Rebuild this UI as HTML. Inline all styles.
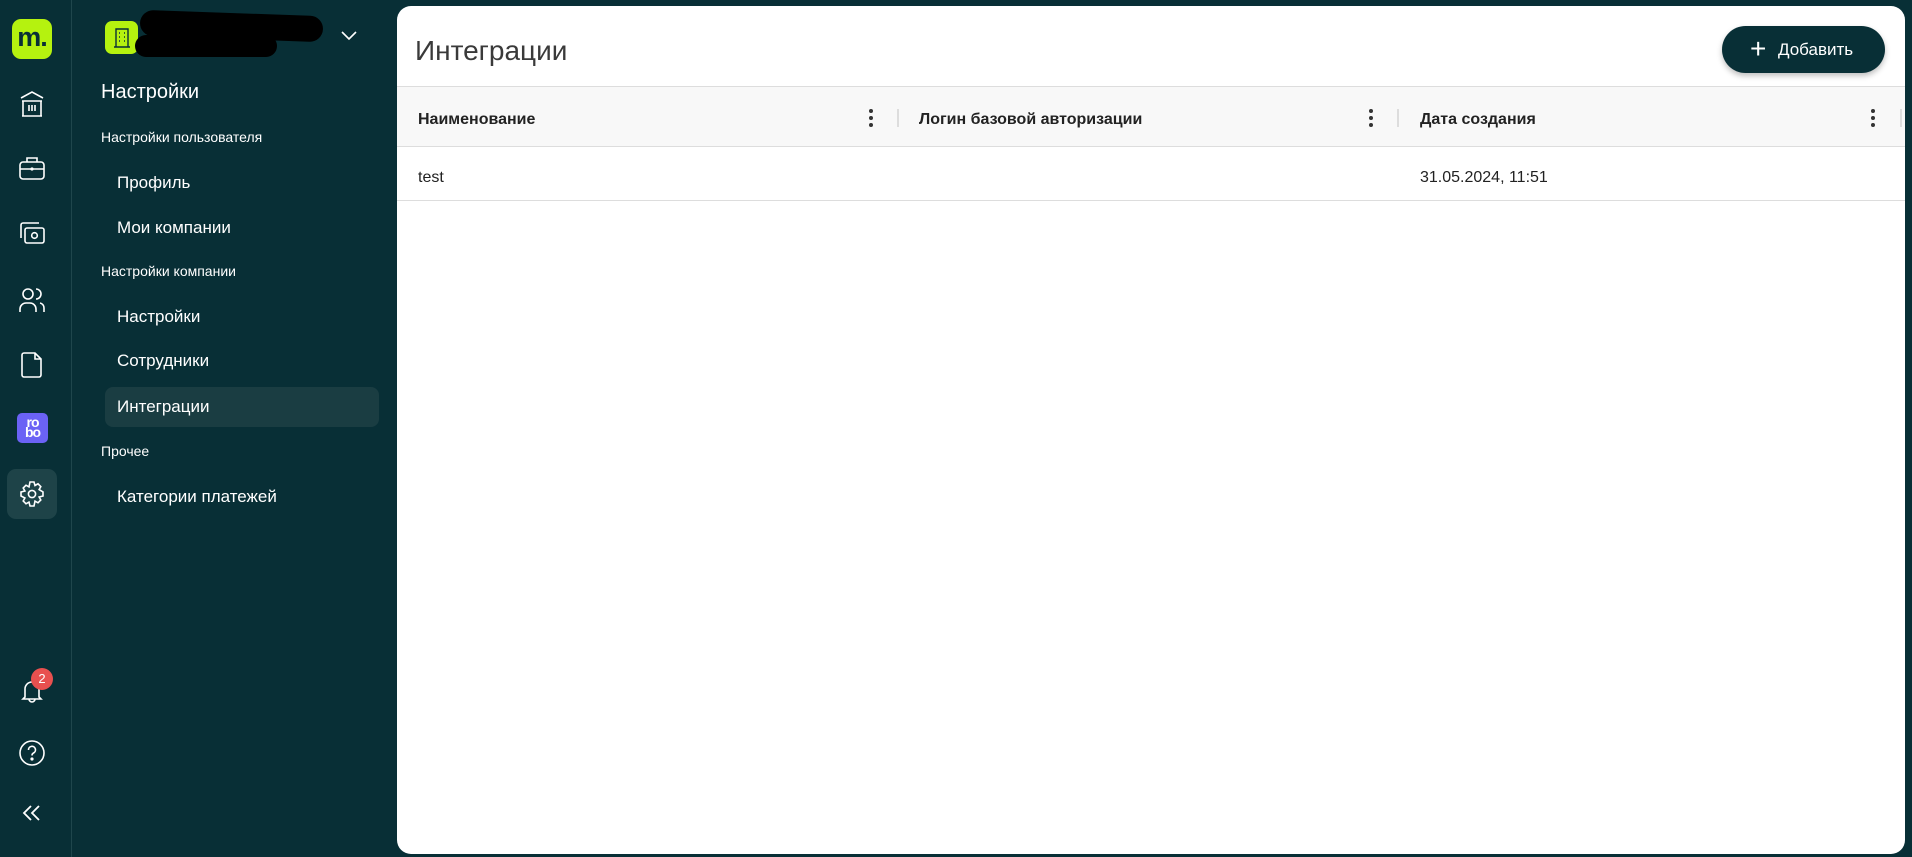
<!DOCTYPE html>
<html><head><meta charset="utf-8"><style>
*{margin:0;padding:0;box-sizing:border-box}
body{width:1912px;height:857px;background:#082f36;font-family:"Liberation Sans","DejaVu Sans",sans-serif;position:relative;overflow:hidden;color:#fff}
.rail{position:absolute;left:0;top:0;width:72px;height:857px;border-right:1px solid #1f464c}
.ic{position:absolute;left:19px;width:26px;height:26px}
.t{position:absolute;white-space:nowrap}
.card{position:absolute;left:397px;top:6px;width:1508px;height:848px;background:#fff;border-radius:14px;overflow:hidden;color:#222}
</style></head><body>
<div class="rail">
 <div style="position:absolute;left:12px;top:19px;width:40px;height:40px;background:#b5f20f;border-radius:9px;color:#082f36;font-weight:bold;font-size:27px;text-align:center;line-height:36px;letter-spacing:-1px">m.</div>
 <svg class="ic" style="top:91px" viewBox="0 0 26 26" fill="none" stroke="#fff" stroke-width="1.6"><path d="M2 7L13 1l11 6M3 10h20M3 25h20M4 10v15M22 10v15M10 14v6M13 14v6M16 14v6"/></svg>
 <svg class="ic" style="top:155px" viewBox="0 0 26 26" fill="none" stroke="#fff" stroke-width="1.6"><rect x="1" y="7" width="24" height="17" rx="3"/><path d="M8 7V3h10v4M1 14h24"/><circle cx="13" cy="14" r=".8" fill="#fff"/></svg>
 <svg class="ic" style="top:220px" viewBox="0 0 26 26" fill="none" stroke="#fff" stroke-width="1.6"><path d="M2 18V5a2 2 0 0 1 2-2h16"/><rect x="6" y="8" width="19" height="15" rx="2"/><circle cx="15.5" cy="15.5" r="2.8"/></svg>
 <svg class="ic" style="top:287px" viewBox="0 0 26 26" fill="none" stroke="#fff" stroke-width="1.6"><circle cx="9" cy="7" r="5"/><path d="M1 25v-3a6 6 0 0 1 6-6h4a6 6 0 0 1 6 6v3M17 2a5 5 0 0 1 0 10M21 16a5 5 0 0 1 4 5v4"/></svg>
 <svg class="ic" style="top:352px" viewBox="0 0 26 26" fill="none" stroke="#fff" stroke-width="1.6"><path d="M5 1h11l6 6v16a2 2 0 0 1-2 2H5a2 2 0 0 1-2-2V3a2 2 0 0 1 2-2zM16 1v6h6"/></svg>
 <div style="position:absolute;left:17px;top:413px;width:31px;height:30px;background:#6b62f5;border-radius:5px;color:#fff;font-weight:bold;font-size:14px;line-height:10px;text-align:center;padding-top:4px;letter-spacing:-1px">ro<br>bo</div>
 <div style="position:absolute;left:7px;top:469px;width:50px;height:50px;background:#1e4348;border-radius:9px"></div>
 <svg class="ic" style="top:481px" viewBox="0 0 26 26" fill="none" stroke="#fff" stroke-width="1.6"><path d="M11 1h4l1 3.5 3-1.7 2.8 2.8-1.7 3L24 11v4l-3.9 1 1.7 3-2.8 2.8-3-1.7L15 25h-4l-1-3.9-3 1.7-2.8-2.8 1.7-3L2 15v-4l3.9-1-1.7-3L7 4.2l3 1.7z"/><circle cx="13" cy="13" r="3.6"/></svg>
 <svg class="ic" style="top:678px" viewBox="0 0 26 26" fill="none" stroke="#fff" stroke-width="1.6"><path d="M6 19v-8a7 7 0 0 1 14 0v8l2 2H4zM10 21a3 3 0 0 0 6 0"/></svg>
 <div style="position:absolute;left:31px;top:668px;width:22px;height:22px;border-radius:50%;background:#e8504f;font-size:13px;text-align:center;line-height:22px">2</div>
 <svg class="ic" style="top:740px" viewBox="0 0 26 26" fill="none" stroke="#fff" stroke-width="1.6"><circle cx="13" cy="13" r="12"/><path d="M9.5 10a3.5 3.5 0 1 1 5 3c-1.2.6-1.5 1.3-1.5 2.5"/><circle cx="13" cy="19" r=".8" fill="#fff"/></svg>
 <svg class="ic" style="top:800px" viewBox="0 0 26 26" fill="none" stroke="#fff" stroke-width="1.8"><path d="M12 6l-7 7 7 7M20 6l-7 7 7 7"/></svg>
</div>
<div style="position:absolute;left:105px;top:21px;width:33px;height:33px;background:#b5f20f;border-radius:7px"></div>
<svg style="position:absolute;left:113px;top:28px" width="18" height="20" viewBox="0 0 18 20" fill="none" stroke="#082f36" stroke-width="1.4"><path d="M3 19V1h12v18M1 19h16M6 5h1M11 5h1M6 9h1M11 9h1M6 13h1M11 13h1"/></svg>
<div style="position:absolute;left:140px;top:13px;width:183px;height:26px;background:#000;border-radius:14px;transform:rotate(2deg)"></div>
<div style="position:absolute;left:135px;top:35px;width:142px;height:22px;background:#000;border-radius:12px"></div>
<svg style="position:absolute;left:341px;top:31px" width="16" height="10" viewBox="0 0 16 10" fill="none" stroke="#fff" stroke-width="1.6"><path d="M1 1l7 7 7-7"/></svg>
<div class="t" style="left:101px;top:81px;font-size:20px">Настройки</div>
<div class="t" style="left:101px;top:129px;font-size:14px">Настройки пользователя</div>
<div class="t" style="left:117px;top:173px;font-size:17px">Профиль</div>
<div class="t" style="left:117px;top:218px;font-size:17px">Мои компании</div>
<div class="t" style="left:101px;top:263px;font-size:14px">Настройки компании</div>
<div class="t" style="left:117px;top:307px;font-size:17px">Настройки</div>
<div class="t" style="left:117px;top:351px;font-size:17px">Сотрудники</div>
<div style="position:absolute;left:105px;top:387px;width:274px;height:40px;background:#1a3d42;border-radius:8px"></div>
<div class="t" style="left:117px;top:397px;font-size:17px">Интеграции</div>
<div class="t" style="left:101px;top:443px;font-size:14px">Прочее</div>
<div class="t" style="left:117px;top:487px;font-size:17px">Категории платежей</div>
<div class="card">
 <div class="t" style="left:18px;top:29px;font-size:28px;color:#3a3a3a">Интеграции</div>
 <div style="position:absolute;left:1325px;top:20px;width:163px;height:47px;background:#082f36;border-radius:24px;color:#fff;font-size:17px;line-height:47px;box-shadow:0 3px 6px rgba(0,0,0,.25)"><span style="position:absolute;left:28px;top:-1px;font-size:28px;font-weight:300">+</span><span style="position:absolute;left:56px">Добавить</span></div>
 <div style="position:absolute;left:0;top:80px;width:100%;height:61px;background:#f8f8f8;border-top:1px solid #ddd;border-bottom:1px solid #ddd"></div>
 <div class="t" style="left:21px;top:105px;font-size:16px;font-weight:bold;color:#222">Наименование</div>
 <div class="t" style="left:522px;top:105px;font-size:16px;font-weight:bold;color:#222">Логин базовой авторизации</div>
 <div class="t" style="left:1023px;top:105px;font-size:16px;font-weight:bold;color:#222">Дата создания</div>
 <div style="position:absolute;left:500px;top:103px;width:2px;height:18px;background:#ddd"></div>
 <div style="position:absolute;left:1000px;top:103px;width:2px;height:18px;background:#ddd"></div>
 <div style="position:absolute;left:1503px;top:103px;width:2px;height:18px;background:#ddd"></div>
 <svg style="position:absolute;left:472px;top:102px" width="4" height="20"><circle cx="2" cy="3" r="2" fill="#333"/><circle cx="2" cy="10" r="2" fill="#333"/><circle cx="2" cy="17" r="2" fill="#333"/></svg>
 <svg style="position:absolute;left:972px;top:102px" width="4" height="20"><circle cx="2" cy="3" r="2" fill="#333"/><circle cx="2" cy="10" r="2" fill="#333"/><circle cx="2" cy="17" r="2" fill="#333"/></svg>
 <svg style="position:absolute;left:1474px;top:102px" width="4" height="20"><circle cx="2" cy="3" r="2" fill="#333"/><circle cx="2" cy="10" r="2" fill="#333"/><circle cx="2" cy="17" r="2" fill="#333"/></svg>
 <div class="t" style="left:21px;top:163px;font-size:16px;color:#222">test</div>
 <div class="t" style="left:1023px;top:163px;font-size:16px;color:#222">31.05.2024, 11:51</div>
 <div style="position:absolute;left:0;top:194px;width:100%;height:1px;background:#ddd"></div>
</div>
</body></html>
